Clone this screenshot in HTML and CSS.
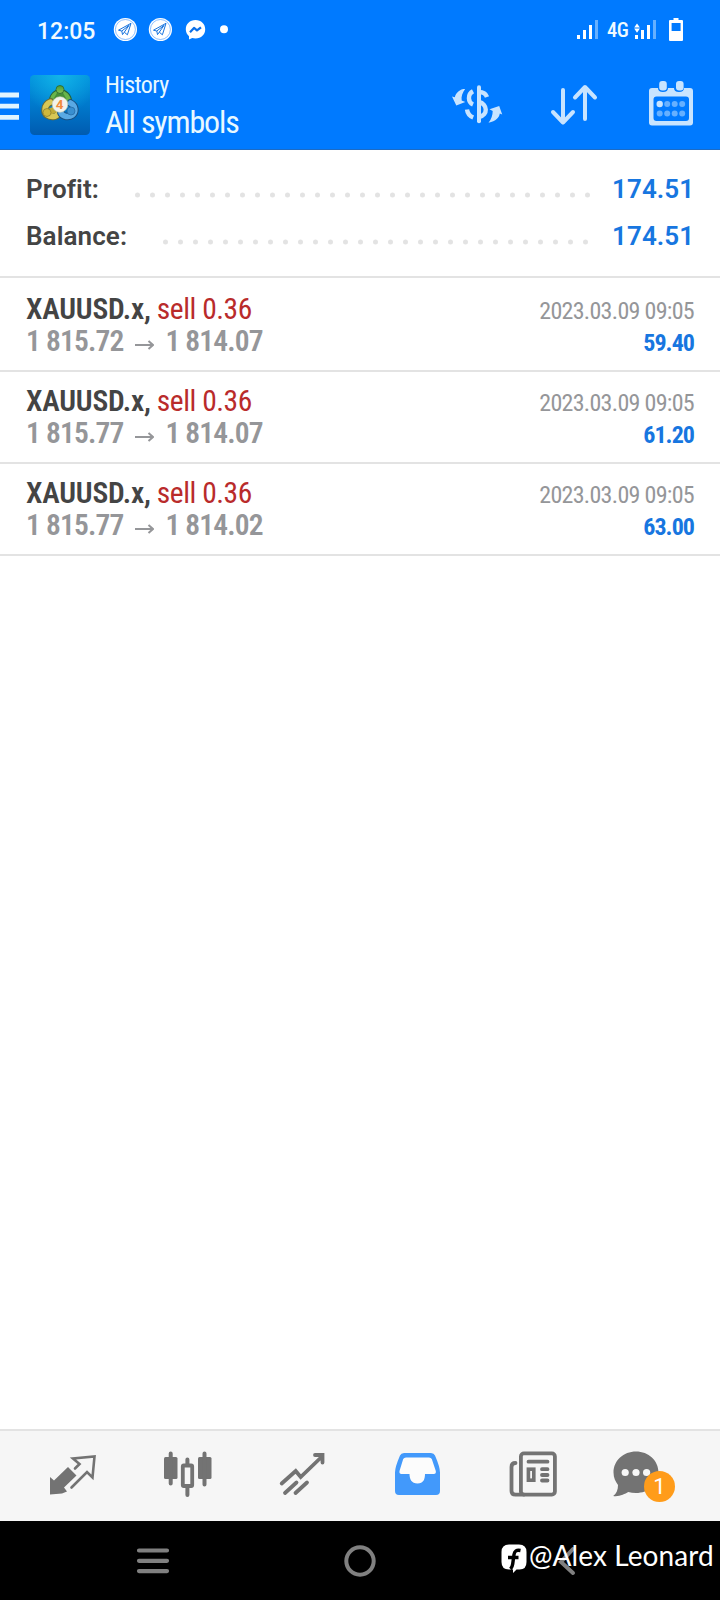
FILE: index.html
```html
<!DOCTYPE html>
<html lang="en">
<head>
<meta charset="utf-8">
<title>History</title>
<link rel="stylesheet" href="styles.css">
</head>
<body>
<div class="screen">
  <div class="status">
    <span class="clock">12:05</span>
    <svg class="status-apps" width="118" height="26" viewBox="112 16 118 26">
      <g id="tg">
        <circle cx="125.4" cy="29.5" r="11.6" fill="#fff"/>
        <circle cx="125.4" cy="29.5" r="10" fill="none" stroke="#3c93ff" stroke-width=".6"/>
        <path d="M118.500 30.200 131 23.300 127.400 34.800 124.300 32.200 122.500 34.600 121.800 31zM121.800 31 129 25.400 124.300 32.200" fill="none" stroke="#1673de" stroke-width="1" stroke-linejoin="round"/>
      </g>
      <use href="#tg" x="35"/>
      <path d="M195.500 20c-5.700 0-9.700 4-9.700 9.200 0 2.900 1.200 5.300 3.200 7v3.400l3.200-1.600c1 .3 2.100.4 3.300.4 5.700 0 9.700-4 9.700-9.200S201.200 20 195.500 20z" fill="#fff"/>
      <path d="m190 32.200 4-4.300 3 2.500 4-3.100" fill="none" stroke="#0a6fe8" stroke-width="2.200" stroke-linejoin="round"/>
      <circle cx="224" cy="29.200" r="4" fill="#fff"/>
    </svg>
    <div class="status-right">
      <svg width="22" height="20" viewBox="0 0 22 20"><path d="M0 15h3v4H0zM6 10h3v9H6zM12 5h3v14h-3z" fill="#fff"/><path d="M18 0h3v19h-3z" fill="#66b0ff"/></svg>
      <span class="net">4G</span>
      <svg width="22" height="20" viewBox="0 0 22 20"><path d="M0 15h3v4H0zM6 10h3v9H6zM12 5h3v14h-3zM-.8 7.400 2 3.500l2.900 3.900zM-.8 8.600h5.700L2 12.700z" fill="#fff"/><path d="M18 0h3v19h-3z" fill="#66b0ff"/></svg>
      <svg class="battery" width="14" height="23" viewBox="0 0 14 23"><path fill-rule="evenodd" d="M4.500 0h5v2H13q1 0 1 1v19q0 1-1 1H1q-1 0-1-1V3q0-1 1-1h3.500zM2.600 5v8h9V5z" fill="#fff"/></svg>
    </div>
  </div>

  <header class="bar">
    <svg class="menu" width="19" height="30" viewBox="0 0 19 30"><path d="M0 3h19M0 14.200h19M0 25.400h19" stroke="#e0f4ff" stroke-width="4.800"/></svg>
    <svg class="logo" width="60" height="60" viewBox="0 0 60 60">
      <defs>
        <linearGradient id="lb" x1="0" y1="0" x2="0" y2="1"><stop offset="0" stop-color="#0090dc"/><stop offset=".5" stop-color="#0079cc"/><stop offset="1" stop-color="#005bb0"/></linearGradient>
        <radialGradient id="lg" cx=".5" cy="0" r=".65"><stop offset="0" stop-color="#12b4e8"/><stop offset="1" stop-color="#12b4e8" stop-opacity="0"/></radialGradient>
        <linearGradient id="gg" x1="0" y1="0" x2="0" y2="1"><stop offset="0" stop-color="#4c9b35"/><stop offset="1" stop-color="#86c455"/></linearGradient>
      </defs>
      <rect width="60" height="60" rx="4.500" fill="url(#lb)"/><rect width="60" height="60" rx="4.500" fill="url(#lg)"/>
      <g fill="none" stroke-linecap="round">
        <path d="M22.500 27C22.500 15 37.500 15 38.500 27" stroke="#245e36" stroke-width="7.500"/>
        <path d="M22.500 27C22.500 15 37.500 15 38.500 27" stroke="#69b54a" stroke-width="5.500"/>
        <path d="M20.500 27C13.500 30 14 38 17.500 40 21 42.500 26 42 28 39" stroke="#6a6c34" stroke-width="7.500"/>
        <path d="M20.500 27C13.500 30 14 38 17.500 40 21 42.500 26 42 28 39" stroke="#d8c755" stroke-width="5.500"/>
        <path d="M40.500 28C46 31 46 37 42.500 40 39 42.500 33 42 31 38" stroke="#184f82" stroke-width="7.500"/>
        <path d="M40.500 28C46 31 46 37 42.500 40 39 42.500 33 42 31 38" stroke="#59a9e4" stroke-width="5.500"/>
      </g>
      <path d="M27.500 17h5l4 7h-13z" fill="#458f38"/>
      <circle cx="30" cy="14.500" r="4" fill="url(#gg)" stroke="#276331" stroke-width=".8"/>
      <path d="m18 34 7-3 2 6-7 3z" fill="#c2ac37"/>
      <circle cx="17" cy="37.500" r="4" fill="#cfb83c" stroke="#796f2e" stroke-width=".6"/>
      <circle cx="41" cy="36" r="4" fill="#398fd0" stroke="#1e609b" stroke-width=".6"/>
      <circle cx="30" cy="29.500" r="7.800" fill="#f2f2ea" stroke="#c3ccb7" stroke-width=".6"/>
      <text class="logo-num" x="29.700" y="34" text-anchor="middle">4</text>
    </svg>
    <div class="titles">
      <div class="subtitle">History</div>
      <div class="title">All symbols</div>
    </div>
    <svg class="actions" width="244" height="50" viewBox="450 79 244 50">
      <g fill="none" stroke="#c8e4ff">
        <path d="M479 87.300v34" stroke-width="4" stroke-linecap="round"/>
        <path d="M473 91.300c-5.600 3-5.200 11 0 13.200M467 109.500c.5 4 2.500 6.500 6.200 8M479 92c4 0 7 2 8 5M479 102c8.500 2 9.500 13 0 15" stroke-width="4.400"/>
        <path d="M563 90v32.500M553 112l10 10.500L573 112M585 119V87.500M575 97.500l10-10.500 10 10.500" stroke-width="4" stroke-linecap="round" stroke-linejoin="round"/>
      </g>
      <g fill="#c8e4ff">
        <path d="M465.500 88.500c-6 1-9.500 4-10.700 8.800l-2.800-.8 4.300 9 9-3.500-3.600-1.400c-.7-4.200.8-8.300 3.800-12.100zM488.500 122.800c7.500-1.300 10.700-5.200 11.300-9.200l2.400 1-3-8.600-9.700 3.300 3.200 1.700c0 4.300-1.300 8-4.200 11.800z"/>
        <path fill-rule="evenodd" d="M652 88h6q0 4 5 4t5-4h6q0 4 5 4t5-4h6q3 0 3 3v31.500q0 3-3 3h-38q-3 0-3-3V91q0-3 3-3zm4.500 8.500q-3 0-3 3V118q0 3 3 3h29.500q3 0 3-3V99.500q0-3-3-3z"/>
        <rect x="659.200" y="81" width="7.600" height="9.500" rx="3"/><rect x="676" y="81" width="7.600" height="9.500" rx="3"/>
        <circle cx="659.700" cy="104" r="3.200"/>
      </g>
      <g fill="#66b0ff"><circle cx="667.200" cy="104" r="3"/><circle cx="674.700" cy="104" r="3"/><circle cx="682.200" cy="104" r="3"/><circle cx="659.700" cy="113.500" r="3"/><circle cx="667.200" cy="113.500" r="3"/><circle cx="674.700" cy="113.500" r="3"/><circle cx="682.200" cy="113.500" r="3"/></g>
    </svg>
  </header>

  <section class="summary">
    <div class="sum-row"><span>Profit:</span><svg class="dots dots-profit" height="6"><path d="M2.500 3H456" class="dotline"/></svg><b>174.51</b></div>
    <div class="sum-row"><span>Balance:</span><svg class="dots dots-balance" height="6"><path d="M2.500 3H426" class="dotline"/></svg><b>174.51</b></div>
  </section>

  <main class="deals">
    <article class="deal">
      <div class="line"><span class="sym">XAUUSD.x,</span><span class="side">sell 0.36</span><span class="date">2023.03.09 09:05</span></div>
      <div class="line"><span class="price">1 815.72</span><svg class="arrow" width="19" height="11" viewBox="0 0 19 11"><path d="M0 5h17M13.500 1 18 5l-4.500 4"/></svg><span class="price">1 814.07</span><span class="gain">59.40</span></div>
    </article>
    <article class="deal">
      <div class="line"><span class="sym">XAUUSD.x,</span><span class="side">sell 0.36</span><span class="date">2023.03.09 09:05</span></div>
      <div class="line"><span class="price">1 815.77</span><svg class="arrow" width="19" height="11" viewBox="0 0 19 11"><path d="M0 5h17M13.500 1 18 5l-4.500 4"/></svg><span class="price">1 814.07</span><span class="gain">61.20</span></div>
    </article>
    <article class="deal">
      <div class="line"><span class="sym">XAUUSD.x,</span><span class="side">sell 0.36</span><span class="date">2023.03.09 09:05</span></div>
      <div class="line"><span class="price">1 815.77</span><svg class="arrow" width="19" height="11" viewBox="0 0 19 11"><path d="M0 5h17M13.500 1 18 5l-4.500 4"/></svg><span class="price">1 814.02</span><span class="gain">63.00</span></div>
    </article>
  </main>

  <nav class="tabs">
    <svg width="50" height="50" viewBox="48 1448 50 50"><path d="M50 1477 54 1480.500 68 1467 76.500 1475.500 64 1487.500 67 1491.500 62 1493.500 50 1494.500z" fill="#737373"/><path d="M75 1468.500 79.500 1464 73 1458.500 94.500 1456.500 92.500 1477.500 87 1472 71.500 1487.500" fill="none" stroke="#737373" stroke-width="2.600" stroke-linecap="round"/></svg>
    <svg width="50" height="50" viewBox="163 1448 50 50"><g fill="#737373"><rect x="164" y="1457" width="13.500" height="22" rx="1.500"/><rect x="198" y="1457" width="13.500" height="22" rx="1.500"/></g><path d="M170.700 1453.500v30M204.500 1453.500v31M187.400 1459.500v5M187.400 1487v8" stroke="#737373" stroke-width="4" stroke-linecap="round"/><rect x="182.800" y="1465.500" width="9.400" height="20.500" rx="1" fill="none" stroke="#737373" stroke-width="3.800"/></svg>
    <svg width="50" height="50" viewBox="278 1448 50 50"><path d="m281.700 1483.500 14-12.500 5 6L321.500 1457M315 1455h7.500v7.500M285 1493l11.500-10.500M295.500 1493l11.500-10.500" fill="none" stroke="#737373" stroke-width="3.800" stroke-linecap="round" stroke-linejoin="miter"/></svg>
    <svg width="50" height="50" viewBox="393 1448 50 50"><path d="M404 1453h27q3 0 4 2.500 5 11.500 5 17V1491q0 4-4 4h-37q-4 0-4-4v-18.500q0-5.500 5-17 1-2.500 4-2.500z" fill="#4299fb"/><path d="M406 1457.500h23q2 0 2.800 1.500l4 12q.5 3-2 3H425c0 5-1.500 9.500-7.500 9.500S409.500 1479 409.500 1474h-8q-2.500 0-2-3l3.700-12q.8-1.500 2.800-1.500z" fill="#fcfcfc"/></svg>
    <svg width="50" height="50" viewBox="508 1448 50 50"><g fill="none" stroke="#737373" stroke-width="3.800"><rect x="520.900" y="1453.400" width="34" height="41.200" rx="3"/><path d="M515.500 1463q-4 0-4 4v24q0 3.600 4 3.600H524M528.500 1461.700h19M542 1469.200h5.500M542 1475h5.500M542 1480.500h5.500" stroke-linecap="round"/><rect x="528.400" y="1469.200" width="5.400" height="11" stroke-width="3.600"/></g></svg>
    <div class="chat">
      <svg width="50" height="50" viewBox="612 1448 50 50"><path d="M636 1451.500c-12.500 0-22.500 9-22.500 21 0 5.500 2 9 4.500 12.500 0 5-1.500 8.500-4.800 11 6 1 11.500-2 15-4 2.500.6 5 1 7.800 1 12.500 0 22.500-8.500 22.500-20.500s-10-21-22.500-21z" fill="#737373"/><g fill="#f6f6f6"><circle cx="625.200" cy="1472.500" r="3.600"/><circle cx="636" cy="1472.500" r="3.600"/><circle cx="646.600" cy="1472.500" r="3.600"/></g></svg>
      <span class="badge">1</span>
    </div>
  </nav>

  <footer class="sysnav">
    <svg width="34" height="28" viewBox="0 0 34 28"><path d="M3 3.500h28M3 13.800h28M3 24.100h28" stroke="#808080" stroke-width="4.200" stroke-linecap="round"/></svg>
    <svg class="home" width="34" height="34" viewBox="0 0 34 34"><circle cx="17" cy="17" r="13.700" fill="none" stroke="#808080" stroke-width="4"/></svg>
    <svg class="back" width="18" height="32" viewBox="0 0 18 32"><path d="M15 3 3 16l12 11" fill="none" stroke="#808080" stroke-width="4" stroke-linecap="round"/></svg>
    <div class="handle">
      <svg width="26" height="30" viewBox="0 0 26 30"><path d="M8 .5h10q7.500 0 7.500 7.500v10q0 7.500-7 7.500h-3L12 29v-3.500H8Q.5 25.500.5 18V8Q.5.500 8 .5z" fill="#fff"/><path d="M19.500 6.500c-4-.8-6 .5-6.500 4L11.700 20q-.4 3-2.200 5M7 13.500h10.500" fill="none" stroke="#000" stroke-width="3.400"/></svg>
      <span class="handle-text">@Alex Leonard</span>
    </div>
  </footer>
</div>
</body>
</html>
```
FILE: styles.css
```css
* { box-sizing: border-box; }
body { margin: 0; background: #fff; font-family: "Roboto", "Liberation Sans", sans-serif; }
svg { display: block; flex: none; }
span, b { white-space: nowrap; }
.screen { width: 720px; height: 1600px; display: flex; flex-direction: column; overflow: hidden; }

.status { height: 60px; background: #007aff; display: flex; align-items: flex-start; color: #f0faff; }
.clock { padding-left: 37px; width: 112px; font-size: 23px; line-height: 64px; font-weight: 500; }
.status-apps { margin-top: 16px; }
.status-right { margin-left: auto; padding: 20px 37px 0 0; display: flex; align-items: flex-start; }
.status-right svg { overflow: visible; }
.net { width: 21px; margin: 0 7px 0 8px; font-size: 20.500px; line-height: 21px; font-stretch: 75%; font-weight: 500; letter-spacing: -0.4px; }
.status-right .battery { margin: -2px 0 0 12px; }

.bar { height: 90px; background: #007aff; border-bottom: 1px solid #1d6bc4; display: flex; align-items: flex-start; }
.menu { margin-top: 32px; }
.logo { margin: 15px 0 0 11px; }
.logo-num { font: bold 13.500px "Roboto", sans-serif; fill: #f08a3c; }
.titles { margin-left: 15px; padding-top: 10px; color: #e8f8ff; font-family: "Roboto Condensed", "Roboto", sans-serif; font-stretch: 75%; }
.subtitle { font-size: 24px; line-height: 30px; letter-spacing: -0.6px; }
.title { font-size: 32px; line-height: 44px; letter-spacing: -1.15px; }
.actions { margin: 19px 26px 0 auto; }

.summary { height: 128px; padding: 16px 27px 0 26px; border-bottom: 2px solid #e3e3e3; }
.sum-row { height: 47px; display: flex; align-items: center; font-size: 26px; line-height: 47px; font-weight: 600; color: #444; letter-spacing: 0.1px; }
.sum-row b { font-weight: 600; color: #1776e0; width: 81px; padding-right: 1px; text-align: right; }
.dots { margin: 11px 0 0 auto; }
.dots-profit { width: 458px; margin-right: 19px; }
.dots-balance { width: 428px; margin-right: 21px; }
.dotline { stroke: #e3e3e3; stroke-width: 5; stroke-linecap: round; stroke-dasharray: 0 15; }

.deals { flex: 1; font-family: "Roboto Condensed", "Roboto", sans-serif; font-stretch: 75%; }
.deal { height: 92px; padding: 13px 26px 0 26px; border-bottom: 2px solid #e3e3e3; }
.deal:first-child { height: 94px; padding-top: 15px; }
.line { display: flex; align-items: baseline; height: 32px; line-height: 32px; font-size: 29.500px; }
.sym { font-weight: 600; color: #444; letter-spacing: -0.2px; }
.side { margin-left: 6px; color: #b92b2b; letter-spacing: -0.45px; }
.date { margin-left: auto; font-size: 24px; color: #959699; letter-spacing: -0.7px; }
.price { font-weight: 600; color: #959699; letter-spacing: -0.85px; }
.arrow { margin: 0 11px 0 12px; }
.arrow path { fill: none; stroke: #959699; stroke-width: 2; }
.gain { margin-left: auto; font-size: 24px; font-weight: 700; color: #1776e0; letter-spacing: -0.95px; }

.tabs { height: 92px; background: #f6f6f6; border-top: 2px solid #e3e3e3; padding: 17px 0 0 48px; display: flex; gap: 65px; }
.chat { position: relative; margin-left: -11px; }
.badge { position: absolute; left: 32px; top: 23px; width: 31px; height: 31px; border-radius: 50%; background: #ff9c1a; color: #fff; font-size: 22px; line-height: 32px; text-align: center; }

.sysnav { position: relative; height: 79px; background: #000; display: flex; padding: 26px 0 0 136px; }
.home { margin: -3px 0 0 173px; }
.back { margin: -1px 0 0 181px; }
.handle { position: absolute; left: 501px; top: 23px; display: flex; color: #fff; }
.handle-text { font: 28px/22px "Lato", sans-serif; margin-left: 2px; letter-spacing: 0.1px; }
```
